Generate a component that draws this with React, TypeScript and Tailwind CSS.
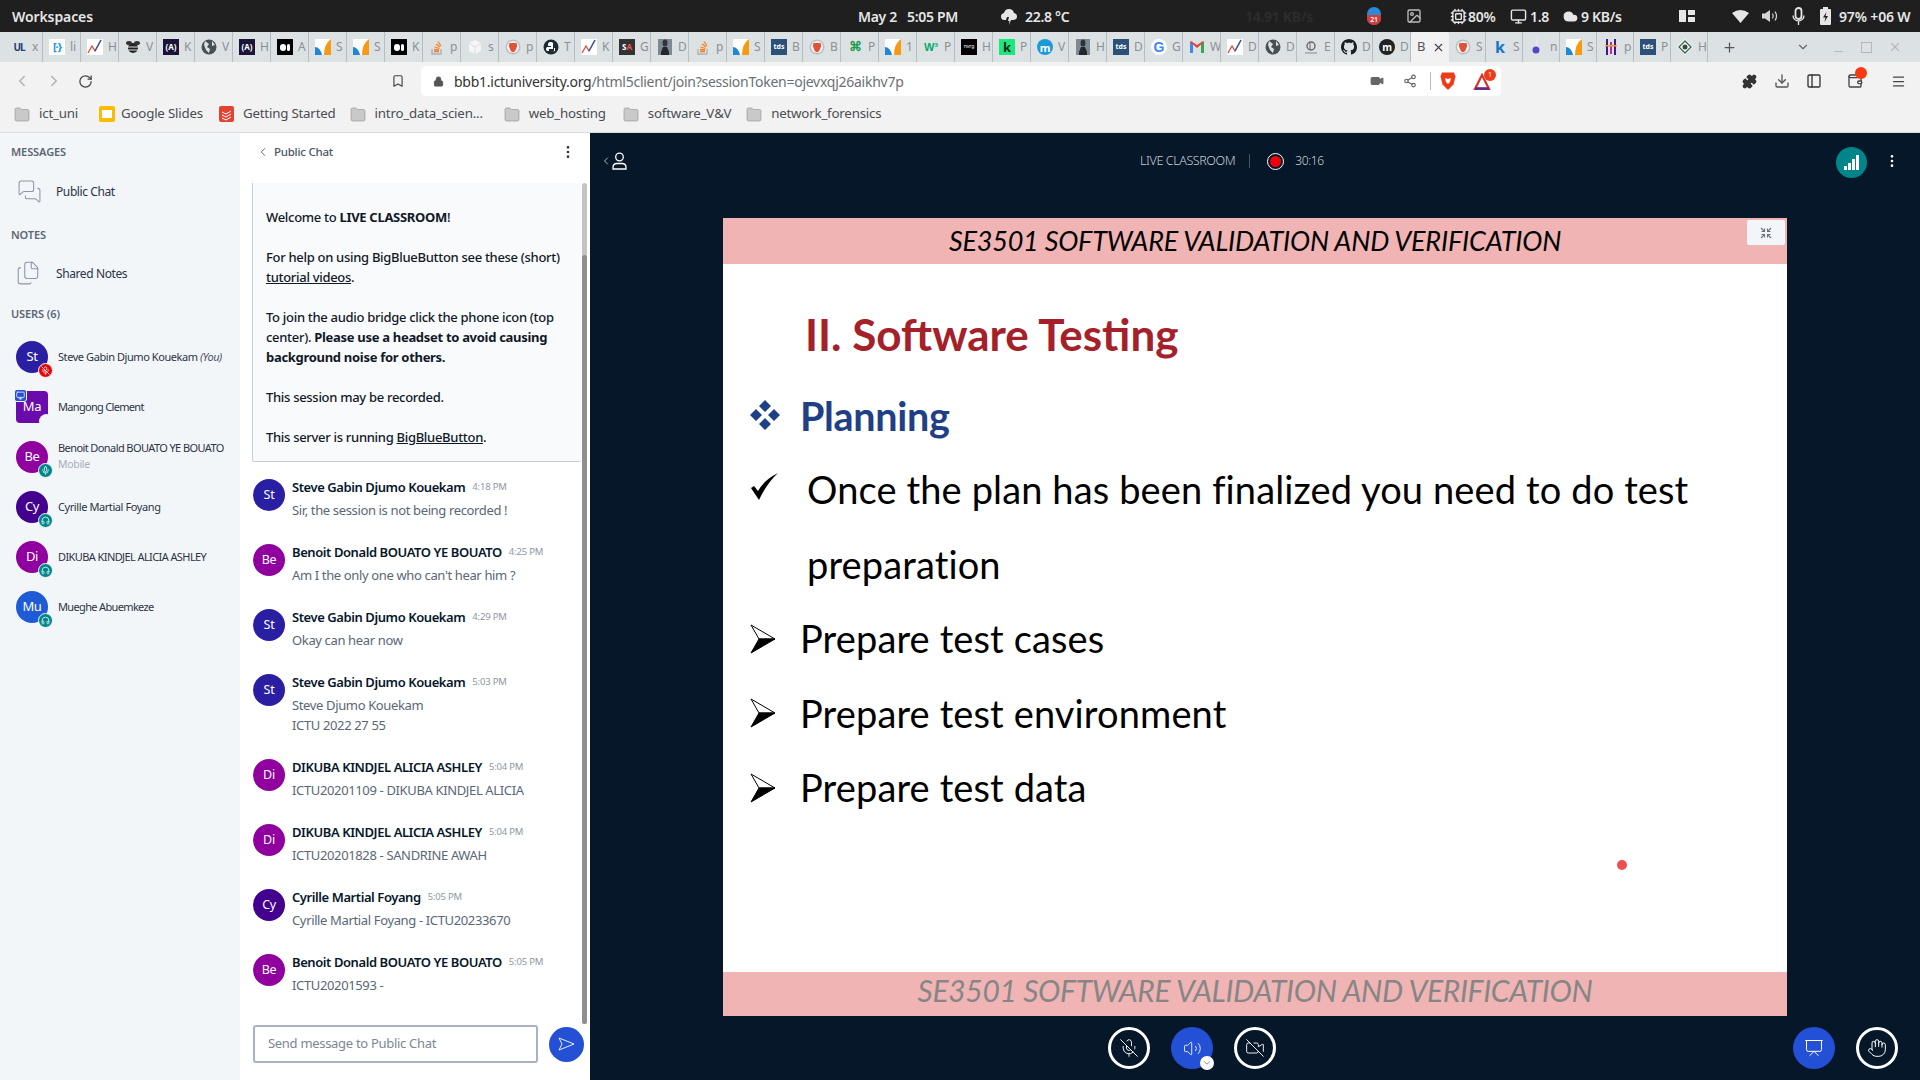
import React from "react";
import { ChevronLeft, ChevronDown, EllipsisVertical, Lock, RotateCw, Bookmark, Video, Share2, Plus, Minus, X, Puzzle, Download, PanelLeft, Wallet, Menu, MessagesSquare, Files, MicOff, Volume2, VideoOff, Hand, Headphones, Mic, Presentation, Monitor, Cloud, Cpu, Image as ImageIcon } from "lucide-react";

type TabDef = [string, string];
const tabsBefore: TabDef[] = [
  ["ul","x"],["br","li"],["chart","H"],["bee","V"],["adark","K"],["globe","V"],["adark","H"],["med","A"],["ob","S"],["ob","S"],["med","K"],["so","p"],["cube","s"],["brave","p"],["py","T"],["chart","K"],["sa","G"],["statue","D"],["so","p"],["ob","S"],["tds","B"],["brave","B"],["greenx","P"],["ob","1"],["w3","P"],["nvrg","H"],["kgreen","P"],["mblue","V"],["statue","H"],["tds","D"],["g","G"],["gm","W"],["chart","D"],["globe","D"],["ed","E"],["gh","D"],["mblack","D"],
];
const tabsAfter: TabDef[] = [["brave","S"],["kblue","S"],["flask","n"],["ob","S"],["purple","p"],["tds","P"],["dia","H"]];

function TabIcon({ k }: { k: string }) {
  const box = "w-4 h-4 shrink-0 flex items-center justify-center";
  const s = "[font-family:'Noto_Sans',sans-serif]";
  switch (k) {
    case "ul": return <div className={`${box} ${s} text-[10px] font-bold text-[#2b3a7a] tracking-[-1px]`}>UL</div>;
    case "br": return <div className={`${box} ${s} text-[11px] font-bold text-[#1d8fd8] bg-white tracking-[-1px]`}>{"[·}"}</div>;
    case "chart": return <svg className="w-4 h-4 shrink-0" viewBox="0 0 16 16"><rect width="16" height="16" fill="#fff"/><path d="M1 14L5 7l3 5 6-11" fill="none" stroke="#e04a3a" strokeWidth="1.3"/><path d="M8 12l6-11" stroke="#1d5fb0" strokeWidth="1.3"/></svg>;
    case "bee": return <svg className="w-4 h-4 shrink-0" viewBox="0 0 16 16"><ellipse cx="8" cy="9" rx="5" ry="5" fill="#222"/><path d="M3 8h10M3 11h10" stroke="#ddd"/><ellipse cx="4" cy="4" rx="3" ry="2" fill="#333"/><ellipse cx="12" cy="4" rx="3" ry="2" fill="#333"/></svg>;
    case "adark": return <div className={`${box} ${s} bg-[#1a1438] text-white text-[8px] font-bold`}>(A)</div>;
    case "globe": return <svg className="w-4 h-4 shrink-0" viewBox="0 0 16 16"><circle cx="8" cy="8" r="7.5" fill="#4a4f54"/><path d="M4 2l4 3-2 3 3 2-1 4-3-3-2-5zM11 2l3 4-3 1z" fill="#dce1e4"/></svg>;
    case "med": return <div className="w-4 h-4 shrink-0 bg-black flex items-center justify-center gap-[1px]"><div className="w-[6px] h-[7px] rounded-full bg-white"/><div className="w-[3px] h-[7px] rounded-full bg-white"/></div>;
    case "ob": return <svg className="w-4 h-4 shrink-0" viewBox="0 0 16 16"><rect width="16" height="16" fill="#fff"/><path d="M0 8q5 0 7 8H0z" fill="#1e88d2"/><path d="M9 16Q9 5 16 0v16z" fill="#f59a12"/></svg>;
    case "so": return <svg className="w-4 h-4 shrink-0" viewBox="0 0 16 16"><path d="M3 10v5h9v-5" fill="none" stroke="#b0b0b0" strokeWidth="1.4"/><path d="M5 12.5h5M5 10.5l5 .5M5.5 8l5 1.5M7 5l4 3M9 2.5l3 4.5" stroke="#f48024" strokeWidth="1.3"/></svg>;
    case "cube": return <svg className="w-4 h-4 shrink-0" viewBox="0 0 16 16"><path d="M8 1l6 3v8l-6 3-6-3V4z" fill="#f5f5f5"/><path d="M8 8v7M2 4l6 4 6-4" stroke="#ddd" fill="none"/></svg>;
    case "brave": return <svg className="w-4 h-4 shrink-0" viewBox="0 0 16 16"><circle cx="8" cy="8" r="7.5" fill="#bdbdbd"/><circle cx="8" cy="8" r="6" fill="#f5f5f5"/><path d="M4.5 4h7l.7 3-2 5-2.2 1.5L5.800 12l-2-5z" fill="#e0533a"/></svg>;
    case "py": return <svg className="w-4 h-4 shrink-0" viewBox="0 0 16 16"><circle cx="8" cy="8" r="7.5" fill="#1c2b33"/><path d="M8 3c-3 0-3 2-3 2v2h3v1H4s-1 1-1 2 1 2 1 2h2v-2h4V6S11 3 8 3z" fill="#fff"/><path d="M8 13c3 0 3-2 3-2V9h1v3z" fill="#fff"/></svg>;
    case "sa": return <div className={`${box} ${s} bg-[#333] text-white text-[8px] font-bold`}><span>S</span><span className="text-[#e55]">A</span></div>;
    case "statue": return <svg className="w-4 h-4 shrink-0" viewBox="0 0 16 16"><rect x="1" y="0" width="14" height="16" fill="#7d8a94"/><ellipse cx="8" cy="4" rx="2.500" ry="3.500" fill="#30343a"/><path d="M4 16v-3l2-5h4l2 5v3z" fill="#23262b"/></svg>;
    case "tds": return <div className={`${box} ${s} bg-[#2c5078] text-white text-[7px] font-bold`}>tds</div>;
    case "greenx": return <div className={`${box} text-[#1f9e55] text-[13px] font-bold`}>⌘</div>;
    case "w3": return <div className={`${box} [font-family:'Liberation_Sans',sans-serif] text-[#04aa6d] text-[11px] font-bold`}>W³</div>;
    case "nvrg": return <div className={`${box} ${s} bg-black text-white text-[5px]`}>nvrg</div>;
    case "kgreen": return <div className={`${box} ${s} bg-[#1de87a] text-[#0a2a1a] text-[13px] leading-none font-bold`}>k</div>;
    case "mblue": return <div className={`${box} ${s} bg-[#1a9ad6] text-white text-[11px] leading-none font-bold rounded-full`}>m</div>;
    case "g": return <div className={`${box} [font-family:'Liberation_Sans',sans-serif] bg-white rounded-full text-[14px] leading-none font-bold text-[#4285f4]`}>G</div>;
    case "gm": return <svg className="w-4 h-4 shrink-0" viewBox="0 0 16 16"><path d="M1 14V3l3 0v11z" fill="#4285f4"/><path d="M12 14V3h3v11z" fill="#34a853"/><path d="M1 3l7 6 7-6-1-1-6 4-6-4z" fill="#ea4335"/></svg>;
    case "ed": return <svg className="w-4 h-4 shrink-0" viewBox="0 0 16 16"><path d="M2 14h12" stroke="#888"/><circle cx="8" cy="7" r="4" fill="none" stroke="#666" strokeWidth="1.4"/><path d="M7 4v6" stroke="#666"/></svg>;
    case "gh": return <svg className="w-4 h-4 shrink-0" viewBox="0 0 16 16"><path fill="#1b1f23" d="M8 0C3.580 0 0 3.580 0 8c0 3.540 2.290 6.530 5.470 7.590.4.070.55-.17.55-.38 0-.19-.01-.82-.01-1.490-2.010.37-2.530-.49-2.690-.94-.09-.23-.48-.94-.82-1.130-.28-.15-.68-.52-.01-.53.63-.01 1.080.58 1.230.82.72 1.210 1.870.87 2.330.66.070-.52.28-.87.51-1.070-1.780-.2-3.640-.89-3.640-3.950 0-.87.31-1.590.82-2.150-.08-.2-.36-1.020.08-2.120 0 0 .67-.21 2.200.82.64-.18 1.320-.27 2-.27s1.360.09 2 .27c1.530-1.040 2.200-.82 2.200-.82.44 1.100.16 1.920.08 2.120.51.56.82 1.270.82 2.150 0 3.070-1.870 3.750-3.650 3.950.29.25.54.73.54 1.480 0 1.070-.01 1.930-.01 2.200 0 .21.15.46.55.38A8.010 8.010 0 0016 8c0-4.420-3.580-8-8-8z"/></svg>;
    case "mblack": return <div className={`${box} ${s} bg-[#222] text-white text-[10px] leading-none font-bold rounded-full`}>m</div>;
    case "kblue": return <div className={`${box} ${s} text-[#1673c8] text-[16px] leading-none font-bold`}>k</div>;
    case "flask": return <svg className="w-4 h-4 shrink-0" viewBox="0 0 16 16"><path d="M7 0h2v6l4 7H3l4-7z" fill="#e7e6f5"/><circle cx="7" cy="11" r="3.500" fill="#5546c8"/></svg>;
    case "purple": return <svg className="w-4 h-4 shrink-0" viewBox="0 0 16 16"><rect x="3" y="0" width="2" height="16" fill="#3b1a8a"/><rect x="7" y="3" width="2" height="12" fill="#c02a90"/><rect x="11" y="0" width="2" height="16" fill="#3b1a8a"/><rect x="2" y="6" width="12" height="1.500" fill="#e8a020"/></svg>;
    case "dia": return <svg className="w-4 h-4 shrink-0" viewBox="0 0 16 16"><path d="M8 0l8 8-8 8-8-8z" fill="#fff"/><path d="M8 2l6 6-6 6-6-6z" fill="none" stroke="#2e6b4a" strokeWidth="1.400"/><circle cx="8" cy="8" r="2.500" fill="#444"/></svg>;
    default: return <div className={box}/>;
  }
}

function Tab({ d }: { d: TabDef }) {
  return (
    <div className="w-[38px] h-[30px] shrink-0 flex items-center pl-[6px] border-r border-[#b9bdc1] overflow-hidden">
      <TabIcon k={d[0]} />
      <span className="ml-[5px] text-[12px] text-[#8d9094] leading-none">{d[1]}</span>
    </div>
  );
}
function Tab2({ d }: { d: TabDef }) {
  return (
    <div className="w-[37px] h-[30px] shrink-0 flex items-center pl-[6px] border-r border-[#b9bdc1] overflow-hidden">
      <TabIcon k={d[0]} />
      <span className="ml-[5px] text-[12px] text-[#8d9094] leading-none">{d[1]}</span>
    </div>
  );
}

function FolderI() {
  return <svg className="w-4 h-[16px] shrink-0" viewBox="0 0 16 16"><path d="M1 3.500Q1 2 2.500 2H6l1.500 1.500h6Q15 3.500 15 5v8.500Q15 15 13.500 15h-11Q1 15 1 13.500z" fill="#c9c9c9" stroke="#8d8d8d" strokeWidth=".6"/></svg>;
}

function BM({ icon, label, ml, gap = "gap-[9px]" }: { icon: React.ReactNode; label: string; ml: string; gap?: string }) {
  return <div className={`flex items-center ${gap} ${ml}`}>{icon}<span className="text-[13.3px] tracking-[-0.2px] text-[#4a4d51] whitespace-nowrap">{label}</span></div>;
}

function SystemBar() {
  return (
    <div className="h-[32px] bg-[#1f1f1f] text-[#e6e6e6] flex items-center text-[14px] font-semibold tracking-[-0.3px] whitespace-nowrap">
      <span className="ml-[12px] w-[846px] tracking-[-0.1px]">Workspaces</span>
      <span className="w-[49px]">May 2</span>
      <span className="w-[93px]">5:05 PM</span>
      <svg className="w-[18px] h-[20px]" viewBox="0 0 18 20"><path d="M4.500 14Q1 14 1 10.500 1 7.500 4 7 5 3 9 3t5 4q3 .5 3 3.500T13.500 14H11l-2 5 .5-4H8l1-4H7l-1 3z" fill="#e6e6e6"/></svg>
      <span className="ml-[7px] w-[220px]">22.8 °C</span>
      <span className="text-[#2c2c2c] w-[122px] font-bold">14.91 KB/s</span>
      <div className="relative w-[14px] h-[18px] rounded-full bg-[#2b8ad8] overflow-hidden"><div className="absolute left-0 right-0 bottom-0 h-[10px] bg-[#d63a3a] text-[7px] text-white text-center leading-[10px]">21</div></div>
      <ImageIcon className="ml-[25px] w-[16px] h-[16px] text-[#bdbdbd]" />
      <Cpu className="ml-[28px] w-[17px] h-[17px]" />
      <span className="ml-[1px] w-[42px]">80%</span>
      <Monitor className="w-[17px] h-[17px]" />
      <span className="ml-[3px] w-[33px]">1.8</span>
      <Cloud className="w-[15px] h-[15px] fill-[#e6e6e6]" />
      <span className="ml-[3px] w-[98px]">9 KB/s</span>
      <div className="grid grid-cols-2 gap-[2px] w-[16px] h-[12px] mr-[37px]"><div className="bg-[#e6e6e6] row-span-2"/><div className="bg-[#e6e6e6]"/><div className="bg-[#e6e6e6]"/></div>
      <svg className="w-[17px] h-[14px]" viewBox="0 0 17 14"><path d="M0 4Q8.500-2 17 4L8.500 14z" fill="#e6e6e6"/></svg>
      <svg className="ml-[13px] w-[17px] h-[14px]" viewBox="0 0 17 14"><path d="M0 4.500h3L8 1v12L3 9.500H0z" fill="#d6d6d6"/><path d="M10.500 4.500q1.500 2.500 0 5M13 2.500q3 4.500 0 9" fill="none" stroke="#d6d6d6" strokeWidth="1.200"/></svg>
      <svg className="ml-[13px] w-[13px] h-[19px]" viewBox="0 0 13 19"><rect x="3.500" y="1" width="6" height="11" rx="3" fill="none" stroke="#e6e6e6" strokeWidth="1.800"/><path d="M1 8.500a5.500 5.500 0 0 0 11 0M6.500 14v4" fill="none" stroke="#e6e6e6" strokeWidth="1.300"/></svg>
      <svg className="ml-[15px] w-[11px] h-[18px]" viewBox="0 0 11 18"><path d="M3 0h5v2h2q1 0 1 1v14q0 1-1 1H1q-1 0-1-1V3q0-1 1-1h2z" fill="#e6e6e6"/><path d="M6.500 5L3 10.500h2.500L4.500 15 8 9H5.500z" fill="#1f1f1f"/></svg>
      <span className="ml-[8px] tracking-[-0.15px]">97% +06 W</span>
    </div>
  );
}

function TabBar() {
  return (
    <div className="h-[30px] bg-[#dce1e4] flex items-center text-[#8d9094]">
      <div className="w-[5px]"/>
      {tabsBefore.map((d, i) => <Tab key={i} d={d} />)}
      <div className="w-[38px] h-[30px] bg-[#f2f2f2] rounded-t-[3px] flex items-center pl-[6px] shrink-0">
        <span className="text-[13px] text-[#555]">B</span>
        <X className="ml-[7px] w-[13px] h-[13px] text-[#444]" />
      </div>
      {tabsAfter.map((d, i) => <Tab2 key={i} d={d} />)}
      <Plus className="ml-[14px] w-[15px] h-[15px] text-[#555]" />
      <ChevronDown className="ml-[59px] w-[14px] h-[14px] text-[#666]" />
      <Minus className="ml-[22px] w-[13px] h-[13px] text-[#b5b8bb] mt-[8px]" />
      <div className="ml-[16px] w-[11px] h-[11px] border border-[#b5b8bb]" />
      <X className="ml-[16px] w-[14px] h-[14px] text-[#b5b8bb]" />
    </div>
  );
}

function Toolbar() {
  return (
    <div className="h-[38px] bg-[#f2f2f2] flex items-center">
      <ChevronLeft className="ml-[13px] w-[18px] h-[18px] text-[#b3b3b3]" />
      <ChevronLeft className="ml-[14px] w-[18px] h-[18px] text-[#b3b3b3] rotate-180" />
      <RotateCw className="ml-[15px] w-[15px] h-[15px] text-[#444]" />
      <Bookmark className="ml-[298px] w-[14px] h-[16px] text-[#444]" />
      <div className="ml-[16px] w-[1080px] h-[30px] bg-white rounded-[5px] flex items-center">
        <Lock className="ml-[12px] w-[11px] h-[11px] text-[#555] fill-[#555]" />
        <span className="ml-[10px] text-[14px] tracking-[-0.26px] text-[#333] whitespace-nowrap">bbb1.ictuniversity.org<span className="text-[#6b6f73]">/html5client/join?sessionToken=ojevxqj26aikhv7p</span></span>
        <div className="flex-1"/>
        <Video className="w-[14px] h-[14px] text-[#666] fill-[#666]" />
        <Share2 className="ml-[19px] w-[14px] h-[14px] text-[#666]" />
        <div className="ml-[13px] w-px h-[18px] bg-[#bbb]"/>
        <svg className="ml-[9px] w-[16px] h-[20px]" viewBox="0 0 16 20"><path d="M2 1.500h12l1.500 4-2 8L8 19l-5.500-5.500-2-8z" fill="#ee3b18"/><path d="M5 7l3 1 3-1-1 4-2 2-2-2z" fill="#fff"/></svg>
        <div className="relative ml-[17px] w-[18px] h-[20px] mr-[10px]">
          <svg className="w-[18px] h-[18px] mt-[2px]" viewBox="0 0 18 18"><path d="M9 2L2 16h14z" fill="none" stroke="#e2332a" strokeWidth="2.200"/><path d="M2 15.500h14" stroke="#5f2a8c" strokeWidth="2.600"/></svg>
          <div className="absolute -right-[5px] -top-[2px] w-[12px] h-[12px] rounded-full bg-[#ee3b18] text-white text-[7px] leading-[12px] text-center">1</div>
        </div>
      </div>
      <Puzzle className="ml-[241px] w-[15px] h-[15px] text-[#333] fill-[#333]" />
      <Download className="ml-[17px] w-[16px] h-[16px] text-[#555]" />
      <PanelLeft className="ml-[16px] w-[16px] h-[16px] text-[#333]" />
      <div className="relative ml-[25px]">
        <Wallet className="w-[16px] h-[16px] text-[#444]" />
        <div className="absolute -right-[4px] -top-[6px] w-[12px] h-[12px] rounded-full bg-[#f53a0f]"/>
      </div>
      <Menu className="ml-[28px] w-[15px] h-[15px] text-[#444]" />
    </div>
  );
}

function Bookmarks() {
  return (
    <div className="h-[33px] pb-[4px] bg-[#f2f2f2] border-b border-[#d9dde0] flex items-center">
      <BM ml="ml-[14px]" icon={<FolderI />} label="ict_uni" />
      <BM ml="ml-[21px]" gap="gap-[6px]" icon={<div className="w-[16px] h-[16px] rounded-[2px] bg-[#fbbc04] flex items-center justify-center"><div className="w-[10px] h-[8px] bg-white"/></div>} label="Google Slides" />
      <BM ml="ml-[16px]" icon={<svg className="w-[15px] h-[16px]" viewBox="0 0 15 16"><rect width="15" height="16" rx="2" fill="#e44332"/><path d="M3 6l4 2 5-3M3 9l4 2 5-3M3 12l4 2 5-3" stroke="#fff" fill="none"/></svg>} label="Getting Started" />
      <BM ml="ml-[14px]" icon={<FolderI />} label="intro_data_scien..." />
      <BM ml="ml-[21px]" icon={<FolderI />} label="web_hosting" />
      <BM ml="ml-[17px]" icon={<FolderI />} label="software_V&V" />
      <BM ml="ml-[15px]" icon={<FolderI />} label="network_forensics" />
    </div>
  );
}

type UserDef = { a: string; c: string; name: string; tr: string; you?: boolean; sub?: string; badge: "red" | "teal" | "mic" | "none" };
const users: UserDef[] = [
  { a: "St", c: "bg-[#2a1fa3]", name: "Steve Gabin Djumo Kouekam", tr: "tracking-[-0.43px]", you: true, badge: "red" },
  { a: "Ma", c: "bg-[#6a0bab]", name: "Mangong Clement", tr: "tracking-[-0.69px]", badge: "none" },
  { a: "Be", c: "bg-[#8f009f]", name: "Benoit Donald BOUATO YE BOUATO", tr: "tracking-[-0.59px]", sub: "Mobile", badge: "mic" },
  { a: "Cy", c: "bg-[#43008f]", name: "Cyrille Martial Foyang", tr: "tracking-[-0.41px]", badge: "teal" },
  { a: "Di", c: "bg-[#8f009f]", name: "DIKUBA KINDJEL ALICIA ASHLEY", tr: "tracking-[-0.59px]", badge: "teal" },
  { a: "Mu", c: "bg-[#1f5bd6]", name: "Mueghe Abuemkeze", tr: "tracking-[-0.65px]", badge: "teal" },
];

function UserRow({ u }: { u: UserDef }) {
  const isMa = u.a === "Ma";
  return (
    <div className="h-[50px] flex items-center pl-[16px]">
      <div className={`relative w-[32px] h-[32px] shrink-0 ${u.c} ${isMa ? "rounded-[4px]" : "rounded-full"} flex items-center justify-center text-white text-[13px] tracking-[-0.3px]`}>
        {u.a}
        {isMa && <div className="absolute -left-[2px] -top-[2px] w-[13px] h-[13px] rounded-[3px] bg-[#2450d6] border border-[#f3f6f9] flex items-center justify-center"><Monitor className="w-[9px] h-[9px] text-white" /></div>}
        {isMa && <div className="absolute -right-[6px] -bottom-[6px] w-[15px] h-[15px] rounded-full bg-[#f3f6f9]" />}
        {u.badge === "red" && <div className="absolute -right-[5px] -bottom-[5px] w-[15px] h-[15px] rounded-full bg-[#e60808] border border-[#f3f6f9] flex items-center justify-center"><MicOff className="w-[9px] h-[9px] text-white" /></div>}
        {u.badge === "mic" && <div className="absolute -right-[5px] -bottom-[5px] w-[15px] h-[15px] rounded-full bg-[#00868a] border border-[#f3f6f9] flex items-center justify-center"><Mic className="w-[9px] h-[9px] text-white" /></div>}
        {u.badge === "teal" && <div className="absolute -right-[5px] -bottom-[5px] w-[15px] h-[15px] rounded-full bg-[#00868a] border border-[#f3f6f9] flex items-center justify-center"><Headphones className="w-[9px] h-[9px] text-white" /></div>}
      </div>
      <div className="ml-[10px] pb-[2px] leading-[17px] whitespace-nowrap">
        <div className={`text-[11px] ${u.tr} text-[#2b3444]`}>{u.name}{u.you && <i className="text-[#4b5563]"> (You)</i>}</div>
        {u.sub && <div className="text-[10.5px] text-[#a4adb8] tracking-[-0.3px]">{u.sub}</div>}
      </div>
    </div>
  );
}

function Sidebar() {
  const h = "h-[20px] leading-[20px] pl-[11px] text-[11px] font-semibold text-[#5b6675] tracking-[-0.1px]";
  return (
    <div className="w-[240px] shrink-0 bg-[#f3f6f9] flex flex-col">
      <div className={`${h} mt-[9px]`}>MESSAGES</div>
      <div className="mt-[4px] h-[50px] flex items-center pl-[17px]">
        <MessagesSquare strokeWidth={1} className="w-[25px] h-[25px] text-[#8b97a6]" />
        <span className="ml-[14px] mt-[2px] text-[12px] tracking-[-0.4px] text-[#2b3444]">Public Chat</span>
      </div>
      <div className={`${h} mt-[9px]`}>NOTES</div>
      <div className="mt-[8px] h-[40px] flex items-center pl-[15px]">
        <Files strokeWidth={1} className="w-[26px] h-[26px] text-[#8b97a6]" />
        <span className="ml-[15px] mt-[2px] text-[12px] tracking-[-0.4px] text-[#2b3444]">Shared Notes</span>
      </div>
      <div className={`${h} mt-[11px]`}>USERS (6)</div>
      <div className="mt-[8px]">{users.map((u, i) => <UserRow key={i} u={u} />)}</div>
    </div>
  );
}

type Msg = { a: string; c: string; name: string; t: string; lines: string[] };
const ST = "bg-[#2a1fa3]", BE = "bg-[#8f009f]", CY = "bg-[#43008f]";
const msgs: Msg[] = [
  { a: "St", c: ST, name: "Steve Gabin Djumo Kouekam", t: "4:18 PM", lines: ["Sir, the session is not being recorded !"] },
  { a: "Be", c: BE, name: "Benoit Donald BOUATO YE BOUATO", t: "4:25 PM", lines: ["Am I the only one who can't hear him ?"] },
  { a: "St", c: ST, name: "Steve Gabin Djumo Kouekam", t: "4:29 PM", lines: ["Okay can hear now"] },
  { a: "St", c: ST, name: "Steve Gabin Djumo Kouekam", t: "5:03 PM", lines: ["Steve Djumo Kouekam", "ICTU 2022 27 55"] },
  { a: "Di", c: BE, name: "DIKUBA KINDJEL ALICIA ASHLEY", t: "5:04 PM", lines: ["ICTU20201109 - DIKUBA KINDJEL ALICIA"] },
  { a: "Di", c: BE, name: "DIKUBA KINDJEL ALICIA ASHLEY", t: "5:04 PM", lines: ["ICTU20201828 - SANDRINE AWAH"] },
  { a: "Cy", c: CY, name: "Cyrille Martial Foyang", t: "5:05 PM", lines: ["Cyrille Martial Foyang - ICTU20233670"] },
  { a: "Be", c: BE, name: "Benoit Donald BOUATO YE BOUATO", t: "5:05 PM", lines: ["ICTU20201593 -"] },
];

function Message({ m }: { m: Msg }) {
  return (
    <div className="flex pl-[1px] pb-[24px] whitespace-nowrap">
      <div className={`w-[32px] h-[32px] shrink-0 rounded-full ${m.c} flex items-center justify-center text-white text-[12.5px] tracking-[-0.3px]`}>{m.a}</div>
      <div className="ml-[7px]">
        <div className="h-[20px] leading-[16px] flex items-baseline">
          <span className="text-[13px] font-semibold tracking-[-0.42px] text-[#06172a]">{m.name}</span>
          <span className="ml-[7px] text-[9.5px] text-[#8f96a0] tracking-[-0.2px] relative -top-[2px]">{m.t}</span>
        </div>
        <div className="mt-[1px] text-[13px] tracking-[-0.36px] leading-[20px] text-[#5b6675]">
          {m.lines.map((l, i) => <div key={i}>{l}</div>)}
        </div>
      </div>
    </div>
  );
}

function Chat() {
  return (
    <div className="w-[350px] shrink-0 bg-white flex flex-col">
      <div className="h-[38px] flex items-center">
        <ChevronLeft strokeWidth={1.5} className="ml-[16px] w-[14px] h-[14px] text-[#4b5563]" />
        <span className="ml-[4px] text-[11.5px] font-medium tracking-[-0.25px] text-[#4b5563]">Public Chat</span>
        <div className="flex-1"/>
        <EllipsisVertical className="mr-[14px] w-[16px] h-[16px] text-[#333]" />
      </div>
      <div className="mt-[12px] h-[841px] flex pl-[12px]">
        <div className="w-[329px]">
          <div className="h-[279px] bg-[#f9fafc] border-l border-b border-[#c6ced9] rounded-b-[2px] pl-[13px] pt-[24px] text-[13px] font-medium leading-[20px] tracking-[-0.3px] text-[#111827] whitespace-nowrap">
            <div>Welcome to <b className="font-bold">LIVE CLASSROOM</b>!</div>
            <div className="mt-[20px]">For help on using BigBlueButton see these (short)</div>
            <div><u>tutorial videos</u>.</div>
            <div className="mt-[20px]">To join the audio bridge click the phone icon (top</div>
            <div>center). <b className="font-bold">Please use a headset to avoid causing</b></div>
            <div><b className="font-bold">background noise for others.</b></div>
            <div className="mt-[20px]">This session may be recorded.</div>
            <div className="mt-[20px]">This server is running <u>BigBlueButton</u>.</div>
          </div>
          <div className="mt-[17px]">{msgs.map((m, i) => <Message key={i} m={m} />)}</div>
        </div>
        <div className="w-[5px] ml-px bg-[#c4c4c4] rounded-full flex flex-col justify-end">
          <div className="h-[769px] bg-[#8f8f8f] rounded-full"/>
        </div>
      </div>
      <div className="mt-[1px] flex items-center pl-[13px]">
        <div className="w-[285px] h-[38px] border-2 border-[#a7b3c2] rounded-[3px] flex items-center pl-[13px] text-[13px] tracking-[-0.3px] text-[#7d8693]">Send message to Public Chat</div>
        <div className="ml-[11px] w-[35px] h-[35px] rounded-full bg-[#2450d6] flex items-center justify-center">
          <svg className="w-[17px] h-[14px]" viewBox="0 0 17 14"><path d="M1 1l15 6-15 6 3-6z" fill="none" stroke="#fff" strokeWidth=".9" strokeLinejoin="round"/></svg>
        </div>
      </div>
    </div>
  );
}

function Arrow() {
  return (
    <svg className="w-[26px] h-[30px] shrink-0" viewBox="0 0 26 30">
      <path d="M1 1l24 14H9z" fill="#fff" stroke="#000" strokeWidth="1"/>
      <path d="M25 15L1 29 9 15z" fill="#000" stroke="#000" strokeWidth="1"/>
    </svg>
  );
}

function SlideLine({ children, bullet, pl }: { children: React.ReactNode; bullet?: React.ReactNode; pl: string }) {
  return (
    <div className="relative h-[74.500px] flex items-center whitespace-nowrap">
      {bullet && <div className="absolute left-[27px] top-0 bottom-0 flex items-center">{bullet}</div>}
      <div className={pl}>{children}</div>
    </div>
  );
}

function Slide() {
  const f = "[font-family:'Lato',sans-serif]";
  return (
    <div className={`relative w-[1064px] h-[798px] mx-auto flex flex-col bg-white ${f}`}>
      <div className="h-[46px] bg-[#f0b4b4] flex items-center justify-center">
        <i className="text-[27px] tracking-[-0.2px] text-black whitespace-nowrap">SE3501 SOFTWARE VALIDATION AND VERIFICATION</i>
      </div>
      <div className="flex-1">
        <div className="mt-[35px] h-[70px] flex items-center pl-[82px] text-[44px] font-bold text-[#a5212a]">II. Software Testing</div>
        <div className="mt-[9px] text-[38px] tracking-[0.13px] text-black">
          <SlideLine pl="pl-[77px]" bullet={<svg className="w-[30px] h-[30px]" viewBox="0 0 30 30" fill="#1f3f86"><path d="M15 0l6 6-6 6-6-6zM6 9l6 6-6 6-6-6zM24 9l6 6-6 6-6-6zM15 18l6 6-6 6-6-6z"/></svg>}>
            <span className="text-[39.5px] font-bold text-[#1f3f86] tracking-[-0.3px]">Planning</span>
          </SlideLine>
          <SlideLine pl="pl-[84px]" bullet={<svg className="w-[30px] h-[30px] -mt-[6px]" viewBox="0 0 30 30"><path d="M1 16l3-2 4 5Q14 8 28 1Q17 11 9 28z" fill="#000"/></svg>}>
            Once the plan has been finalized you need to do test
          </SlideLine>
          <SlideLine pl="pl-[84px]">preparation</SlideLine>
          <SlideLine pl="pl-[77px]" bullet={<Arrow />}>Prepare test cases</SlideLine>
          <SlideLine pl="pl-[77px]" bullet={<Arrow />}>Prepare test environment</SlideLine>
          <SlideLine pl="pl-[77px]" bullet={<Arrow />}>Prepare test data</SlideLine>
        </div>
      </div>
      <div className="h-[44px] pb-[7px] bg-[#f0b4b4] flex items-center justify-center">
        <i className="text-[30px] tracking-[-0.35px] text-[#868686] whitespace-nowrap">SE3501 SOFTWARE VALIDATION AND VERIFICATION</i>
      </div>
      <div className="absolute right-[2px] top-[2px] w-[38px] h-[25px] bg-[#f3f6f9] rounded-[2px] flex items-center justify-center">
        <svg className="w-[12px] h-[12px]" viewBox="0 0 12 12" fill="none" stroke="#6b7280" strokeWidth="1.100"><path d="M1 1l3.500 3.500M4.500 1.500v3h-3M11 1L7.500 4.500M7.500 1.500v3h3M1 11l3.500-3.500M4.500 10.500v-3h-3M11 11L7.500 7.500M7.500 10.500v-3h3"/></svg>
      </div>
      <div className="absolute left-[894px] top-[642px] w-[10px] h-[10px] rounded-full bg-[#ef4f50]" />
    </div>
  );
}

function CircleBtn({ filled, children }: { filled?: boolean; children: React.ReactNode }) {
  return (
    <div className={`relative w-[42px] h-[42px] rounded-full flex items-center justify-center text-white ${filled ? "bg-[#2450d6]" : "border-[3px] border-white"}`}>
      {children}
    </div>
  );
}

function Main() {
  return (
    <div className="flex-1 bg-[#06172a] flex flex-col">
      <div className="h-[56px] flex items-center relative text-[#c9ced6]">
        <ChevronLeft strokeWidth={1.6} className="ml-[10px] w-[12px] h-[14px] text-[#d5d9df]" />
        <svg className="w-[15px] h-[18px]" viewBox="0 0 15 18" fill="none" stroke="#fff" strokeWidth="1.300"><circle cx="7.500" cy="5" r="3.800"/><path d="M1 17v-1.500q0-4 4-4h5q4 0 4 4V17z"/></svg>
        <span className="ml-[513px] text-[12.5px] font-light tracking-[-0.4px] whitespace-nowrap">LIVE CLASSROOM</span>
        <div className="ml-[14px] w-px h-[14px] bg-[#4a5564]"/>
        <div className="ml-[17px] w-[17px] h-[17px] rounded-full border border-white flex items-center justify-center"><div className="w-[11px] h-[11px] rounded-full bg-[#f00008]"/></div>
        <span className="ml-[11px] text-[12px] font-light tracking-[-0.4px]">30:16</span>
        <div className="flex-1"/>
        <div className="mt-[2px] w-[31px] h-[31px] rounded-full bg-[#00868a] flex items-end justify-center gap-[1.500px] pb-[8px]">
          <div className="w-[2.500px] h-[4px] bg-white"/><div className="w-[2.500px] h-[7px] bg-white"/><div className="w-[2.500px] h-[11px] bg-white"/><div className="w-[2.500px] h-[15px] bg-white"/>
        </div>
        <EllipsisVertical className="ml-[17px] mr-[20px] w-[16px] h-[16px] text-white" />
      </div>
      <div className="h-[29px]"/>
      <Slide />
      <div className="flex-1 flex items-center pl-[518px] pr-[22px]">
        <div className="flex gap-[21px]">
          <CircleBtn><MicOff strokeWidth={1.1} className="w-[20px] h-[20px]" /></CircleBtn>
          <CircleBtn filled>
            <Volume2 strokeWidth={1.1} className="w-[19px] h-[19px]" />
            <div className="absolute -right-[1px] -bottom-[1px] w-[14px] h-[14px] rounded-full bg-white flex items-center justify-center"><ChevronDown className="w-[10px] h-[10px] text-[#6b7280]" /></div>
          </CircleBtn>
          <CircleBtn><VideoOff strokeWidth={1.1} className="w-[20px] h-[20px]" /></CircleBtn>
        </div>
        <div className="ml-auto flex gap-[21px]">
          <CircleBtn filled><Presentation strokeWidth={1.2} className="w-[20px] h-[20px]" /></CircleBtn>
          <CircleBtn><Hand strokeWidth={1.2} className="w-[20px] h-[20px]" /></CircleBtn>
        </div>
      </div>
    </div>
  );
}

export default function App() {
  return (
    <div className="w-[1920px] h-[1080px] overflow-hidden flex flex-col [font-family:'Noto_Sans',sans-serif]">
      <SystemBar />
      <TabBar />
      <Toolbar />
      <Bookmarks />
      <div className="flex-1 flex min-h-0">
        <Sidebar />
        <Chat />
        <Main />
      </div>
    </div>
  );
}
